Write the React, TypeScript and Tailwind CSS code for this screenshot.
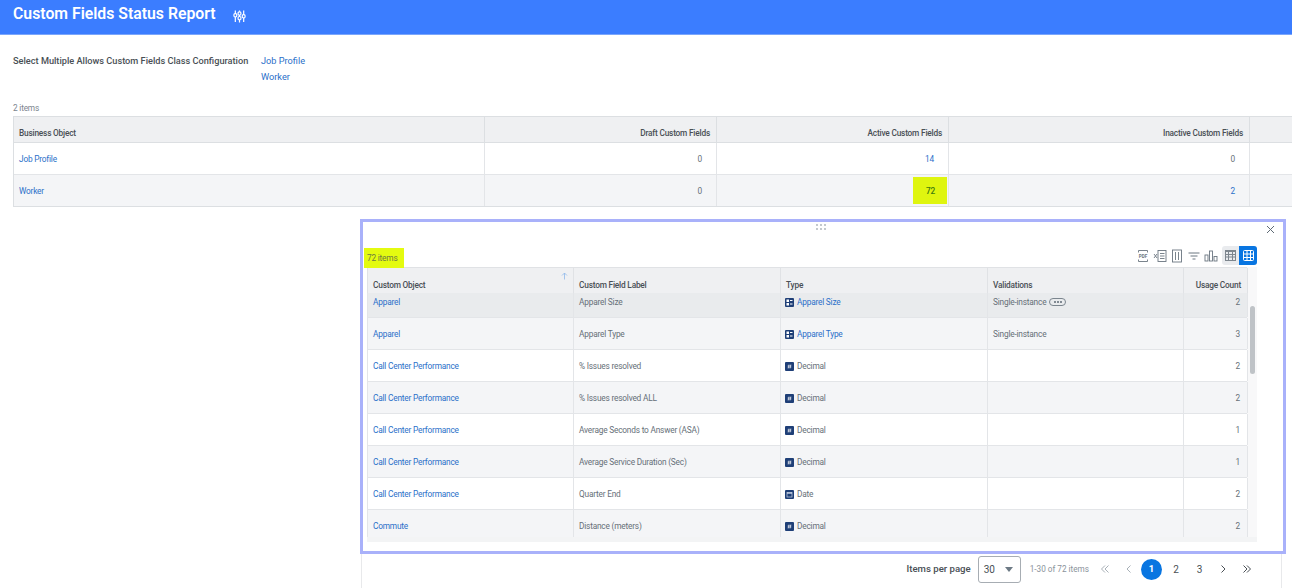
import React from "react";

const font = { fontFamily: "Roboto, 'Liberation Sans', sans-serif" };

function SlidersIcon() {
  return (
    <svg width="13" height="13" viewBox="0 0 14 14" fill="none" stroke="white" strokeWidth="1.3">
      <path d="M2.5 0.5v3.5M2.5 7.5V13M7 0.5v1.3M7 5.5V7M7 10.5V13.5M11.5 0.5v4M11.5 8.5V13" />
      <rect x="1" y="4" width="3" height="3.5" rx="1.2" />
      <rect x="5.5" y="2" width="3" height="3.5" rx="1.2" />
      <rect x="5.5" y="7" width="3" height="3.5" rx="1.2" />
      <rect x="10" y="5" width="3" height="3.5" rx="1.2" />
    </svg>
  );
}

function InstanceIcon() {
  return (
    <svg width="9" height="9" viewBox="0 0 9 9" className="shrink-0">
      <rect width="9" height="9" rx="1" fill="#1f3f77" />
      <rect x="1.5" y="1.5" width="2.5" height="2.5" fill="white" />
      <rect x="5" y="2" width="2.5" height="1" fill="white" />
      <rect x="1.5" y="5" width="2.5" height="2.5" fill="white" />
      <rect x="5" y="5.5" width="2.5" height="1" fill="white" />
    </svg>
  );
}

function DecimalIcon() {
  return (
    <svg width="9" height="9" viewBox="0 0 9 9" className="shrink-0">
      <rect width="9" height="9" rx="1" fill="#1f3f77" />
      <path d="M3.2 6.5L4 2.5M5 6.5L5.8 2.5M2.7 3.9H6.3M2.7 5.1H6.3" stroke="white" strokeWidth="0.6" />
    </svg>
  );
}

function DateIcon() {
  return (
    <svg width="9" height="9" viewBox="0 0 9 9" className="shrink-0">
      <rect width="9" height="9" rx="1" fill="#1f3f77" />
      <rect x="2" y="2.5" width="5" height="4.5" fill="none" stroke="#c8d3e6" strokeWidth="0.7" />
      <rect x="2" y="2.5" width="5" height="1.2" fill="#c8d3e6" />
    </svg>
  );
}

function Toolbar() {
  return (
    <div className="flex items-center gap-[3px] text-[#5e6a75]">
      <svg width="14" height="14" viewBox="0 0 14 14" fill="none" stroke="#6b7680" strokeWidth="0.9">
        <path d="M2.5 3.5V1.5H11.5V3.5M2.5 10.5V12.5H11.5V10.5" />
        <text x="7" y="9" textAnchor="middle" fontSize="4.6" fontWeight="700" fill="#6b7680" stroke="none" fontFamily="Roboto">PDF</text>
      </svg>
      <svg width="14" height="14" viewBox="0 0 14 14" fill="none" stroke="#6b7680" strokeWidth="0.9">
        <rect x="5" y="1.5" width="8" height="11" />
        <path d="M7 4.5H11.5M7 7H11.5M7 9.5H11.5" />
        <path d="M1 5L4 9M4 5L1 9" />
      </svg>
      <svg width="14" height="14" viewBox="0 0 14 14" fill="none" stroke="#6b7680" strokeWidth="0.9">
        <rect x="2.5" y="1" width="9" height="12" />
        <path d="M5.5 3V11M8.5 3V11" />
      </svg>
      <svg width="14" height="14" viewBox="0 0 14 14" fill="none" stroke="#6b7680" strokeWidth="1">
        <path d="M1.5 4H12.5M3.5 7H10.5M5.5 10H8.5" />
      </svg>
      <svg width="14" height="14" viewBox="0 0 14 14" fill="none" stroke="#6b7680" strokeWidth="0.9">
        <rect x="1" y="6" width="3" height="6" />
        <rect x="5.5" y="2" width="3" height="10" />
        <rect x="10" y="7.5" width="3" height="4.5" />
      </svg>
      <div className="ml-[1px] flex h-[19px] items-stretch overflow-hidden rounded-[3px] bg-[#e9ebee]">
        <div className="flex w-[17px] items-center justify-center">
          <svg width="11" height="11" viewBox="0 0 11 11" fill="#7d868e">
            <path d="M0 0H11V11H0ZM1 2V4H3V2ZM4 2V4H7V2ZM8 2V4H10V2ZM1 5V6.5H3V5ZM4 5V6.5H7V5ZM8 5V6.5H10V5ZM1 7.5V10H3V7.5ZM4 7.5V10H7V7.5ZM8 7.5V10H10V7.5Z" fillRule="evenodd" />
          </svg>
        </div>
        <div className="flex w-[18px] items-center justify-center bg-[#0875e1]">
          <svg width="11" height="11" viewBox="0 0 11 11" fill="none" stroke="white" strokeWidth="1">
            <rect x="0.5" y="0.5" width="10" height="10" rx="1" />
            <path d="M0.5 4H10.5M0.5 7.5H10.5M4 0.5V10.5M7.5 0.5V10.5" />
          </svg>
        </div>
      </div>
    </div>
  );
}

type Row = { obj: string; label: string; icon: "i" | "d" | "t"; type: string; link?: boolean; val?: string; more?: boolean; count: string; tone: string };

const rows: Row[] = [
  { obj: "Apparel", label: "Apparel Size", icon: "i", type: "Apparel Size", link: true, val: "Single-instance", more: true, count: "2", tone: "bg-[#e9ebed]" },
  { obj: "Apparel", label: "Apparel Type", icon: "i", type: "Apparel Type", link: true, val: "Single-instance", count: "3", tone: "bg-[#f4f5f7]" },
  { obj: "Call Center Performance", label: "% Issues resolved", icon: "d", type: "Decimal", count: "2", tone: "bg-white" },
  { obj: "Call Center Performance", label: "% Issues resolved ALL", icon: "d", type: "Decimal", count: "2", tone: "bg-[#f4f5f7]" },
  { obj: "Call Center Performance", label: "Average Seconds to Answer (ASA)", icon: "d", type: "Decimal", count: "1", tone: "bg-white" },
  { obj: "Call Center Performance", label: "Average Service Duration (Sec)", icon: "d", type: "Decimal", count: "1", tone: "bg-[#f4f5f7]" },
  { obj: "Call Center Performance", label: "Quarter End", icon: "t", type: "Date", count: "2", tone: "bg-white" },
  { obj: "Commute", label: "Distance (meters)", icon: "d", type: "Decimal", count: "2", tone: "bg-[#f4f5f7]" },
];

const cols2 = "grid grid-cols-[206px_207px_207px_196px_64px]";
const cols1 = "grid grid-cols-[471px_232px_232px_301px_1fr]";

function Pager() {
  const arrow = "flex h-[24px] w-[24px] items-center justify-center";
  return (
    <div className="flex h-[34px] items-center justify-end pb-[4px] pr-[22px]">
      <span className="mr-[7px] text-[9.6px] font-medium text-[#494f55]">Items per page</span>
      <div className="mr-[9px] flex h-[27px] w-[43px] items-center justify-between rounded-[3px] border border-[#a7adb3] pl-[5px] pr-[7px] text-[10px] text-[#494f55]">
        <span>30</span>
        <span className="h-0 w-0 border-x-[4px] border-t-[5px] border-x-transparent border-t-[#6d7a85]" />
      </div>
      <span className="mr-[4px] text-[8.2px] text-[#8a939b]">1-30 of 72 items</span>
      <div className={arrow}>
        <svg width="10" height="10" viewBox="0 0 10 10" fill="none" stroke="#a8b0b7" strokeWidth="1"><path d="M5 1.5L1.5 5L5 8.5M8.5 1.5L5 5L8.5 8.5" /></svg>
      </div>
      <div className={arrow}>
        <svg width="10" height="10" viewBox="0 0 10 10" fill="none" stroke="#a8b0b7" strokeWidth="1"><path d="M6.5 1.5L3 5L6.5 8.5" /></svg>
      </div>
      <div className="flex h-[21px] w-[21px] items-center justify-center rounded-full bg-[#0875e1] text-[9.5px] font-bold text-white">1</div>
      <div className="ml-[2px] flex h-[24px] w-[24px] items-center justify-center text-[10px] text-[#494f55]">2</div>
      <div className="flex h-[24px] w-[23px] items-center justify-center text-[10px] text-[#494f55]">3</div>
      <div className={arrow}>
        <svg width="10" height="10" viewBox="0 0 10 10" fill="none" stroke="#494f55" strokeWidth="1"><path d="M3.5 1.5L7 5L3.5 8.5" /></svg>
      </div>
      <div className={arrow}>
        <svg width="10" height="10" viewBox="0 0 10 10" fill="none" stroke="#494f55" strokeWidth="1"><path d="M1.5 1.5L5 5L1.5 8.5M5 1.5L8.5 5L5 8.5" /></svg>
      </div>
    </div>
  );
}

export default function App() {
  return (
    <div className="h-[588px] w-[1292px] overflow-hidden bg-white text-[#666f78]" style={font}>
      <header className="flex h-[35px] items-center border-b border-[#7ba6fb] bg-[#3b7dff] pb-[6px] pl-[13px]">
        <h1 className="whitespace-nowrap text-[15.8px] font-semibold text-white">Custom Fields Status Report</h1>
        <span className="ml-[17px] mt-[4px]"><SlidersIcon /></span>
      </header>

      <section className="flex pl-[13px] pt-[18px] text-[9.2px] leading-[16px]">
        <span className="w-[248px] whitespace-nowrap font-medium text-[#494f55]">Select Multiple Allows Custom Fields Class Configuration</span>
        <div className="flex flex-col text-[#2a6fc9]">
          <span>Job Profile</span>
          <span>Worker</span>
        </div>
      </section>

      <div className="pl-[13px] pt-[17px] text-[8.3px] leading-[12px] tracking-[-0.2px] text-[#7b858e]">2 items</div>

      <div className={`${cols1} ml-[13px] mt-[2px] border-y border-l border-[#dcdfe2] text-[8.3px] tracking-[-0.2px]`}>
        <div className="flex h-[26px] items-end border-r border-b border-[#dcdfe2] bg-[#eff0f2] pb-[3px] pl-[5px] font-medium text-[#494f55]">Business Object</div>
        <div className="flex items-end justify-end border-r border-b border-[#dcdfe2] bg-[#eff0f2] pb-[3px] pr-[6px] font-medium text-[#494f55]">Draft Custom Fields</div>
        <div className="flex items-end justify-end border-r border-b border-[#dcdfe2] bg-[#eff0f2] pb-[3px] pr-[6px] font-medium text-[#494f55]">Active Custom Fields</div>
        <div className="flex items-end justify-end border-r border-b border-[#dcdfe2] bg-[#eff0f2] pb-[3px] pr-[6px] font-medium text-[#494f55]">Inactive Custom Fields</div>
        <div className="border-b border-[#dcdfe2] bg-[#eff0f2]" />

        <div className="flex h-[32px] items-center border-r border-b border-[#e3e5e8] pl-[5px] pt-[1px] text-[#2a6fc9]">Job Profile</div>
        <div className="flex items-center justify-end border-r border-b border-[#e3e5e8] pr-[14px] pt-[1px]">0</div>
        <div className="flex items-center justify-end border-r border-b border-[#e3e5e8] pr-[14px] pt-[1px] text-[#2a6fc9]">14</div>
        <div className="flex items-center justify-end border-r border-b border-[#e3e5e8] pr-[14px] pt-[1px]">0</div>
        <div className="border-b border-[#e3e5e8]" />

        <div className="flex h-[31px] items-center border-r border-[#e3e5e8] bg-[#f4f5f7] pl-[5px] pt-[1px] text-[#2a6fc9]">Worker</div>
        <div className="flex items-center justify-end border-r border-[#e3e5e8] bg-[#f4f5f7] pr-[14px] pt-[1px]">0</div>
        <div className="flex items-center justify-end border-r border-[#e3e5e8] bg-[#f4f5f7] pr-[1px]">
          <span className="flex h-[27px] w-[34px] items-center justify-center bg-[#dff50f] pl-[1px] pt-[1px] font-medium text-[#3c7a10]">72</span>
        </div>
        <div className="flex items-center justify-end border-r border-[#e3e5e8] bg-[#f4f5f7] pr-[14px] pt-[1px] text-[#2a6fc9]">2</div>
        <div className="bg-[#f4f5f7]" />
      </div>

      <div className="ml-[361px] mt-[12px] w-[921px] border-x border-[#e8e9eb]">
        <section className="relative -ml-[2px] -mr-[5px] h-[335px] border-[3px] border-[#a9b1fa] bg-white">
          <div className="flex h-[9px] justify-center pr-[4px] pt-[2px]">
            <svg width="10" height="6" viewBox="0 0 10 6" fill="#a8b0b7">
              <circle cx="1" cy="1" r="0.9" /><circle cx="5" cy="1" r="0.9" /><circle cx="9" cy="1" r="0.9" />
              <circle cx="1" cy="5" r="0.9" /><circle cx="5" cy="5" r="0.9" /><circle cx="9" cy="5" r="0.9" />
            </svg>
          </div>
          <svg width="9" height="9" viewBox="0 0 9 9" fill="none" stroke="#5e6a75" strokeWidth="1" className="absolute right-[8px] top-[3px]">
            <path d="M1 1L8 8M8 1L1 8" />
          </svg>

          <div className="flex h-[36px] items-end justify-between pl-[1px] pr-[26px]">
            <span className="-mb-[1px] flex h-[20px] w-[40px] items-center bg-[#e4fb10] pl-[3px] pt-[1px] text-[8.3px] tracking-[-0.2px] text-[#6c7a40]">72 items</span>
            <div className="mb-[2px]"><Toolbar /></div>
          </div>

          <div className="ml-[4px] w-[890px] bg-[#f8f8f9] tracking-[-0.2px]">
            <div className={`${cols2} w-[880px] border-l border-t border-[#e0e2e5] bg-[#eff0f2] text-[8.3px] font-medium text-[#494f55]`}>
              <div className="relative flex h-[25px] items-end border-r border-[#e0e2e5] pb-[2px] pl-[5px]">
                Custom Object
                <svg width="7" height="8" viewBox="0 0 7 8" fill="none" stroke="#8fb9ea" strokeWidth="0.8" className="absolute right-[5px] top-[4px]">
                  <path d="M3.5 7.5V1M1 3.5L3.5 1L6 3.5" />
                </svg>
              </div>
              <div className="flex items-end border-r border-[#e0e2e5] pb-[2px] pl-[5px]">Custom Field Label</div>
              <div className="flex items-end border-r border-[#e0e2e5] pb-[2px] pl-[5px]">Type</div>
              <div className="flex items-end border-r border-[#e0e2e5] pb-[2px] pl-[5px]">Validations</div>
              <div className="flex items-end justify-end border-r border-[#e0e2e5] pb-[2px] pr-[6px]">Usage Count</div>
            </div>

            <div className="relative h-[244px] overflow-hidden">
              <div className="-mt-[7px] w-[880px]">
                {rows.map((r, i) => (
                  <div key={i} className={`${cols2} h-[32px] border-b border-l border-[#e3e5e8] text-[8.3px] ${r.tone}`}>
                    <div className="flex items-center border-r border-[#e3e5e8] pl-[5px] pt-[1px] text-[#2a6fc9]">{r.obj}</div>
                    <div className="flex items-center border-r border-[#e3e5e8] pl-[5px] pt-[1px]">{r.label}</div>
                    <div className="flex items-center gap-[3px] border-r border-[#e3e5e8] pl-[4px] pt-[1px]">
                      {r.icon === "i" ? <InstanceIcon /> : r.icon === "d" ? <DecimalIcon /> : <DateIcon />}
                      <span className={r.link ? "text-[#2a6fc9]" : ""}>{r.type}</span>
                    </div>
                    <div className="flex items-center gap-[3px] border-r border-[#e3e5e8] pl-[5px] pt-[1px]">
                      {r.val}
                      {r.more && (
                        <span className="flex h-[8px] w-[17px] items-center justify-center gap-[1.5px] rounded-full border border-[#7b858e]">
                          <i className="h-[1.5px] w-[1.5px] rounded-full bg-[#5e6a75]" />
                          <i className="h-[1.5px] w-[1.5px] rounded-full bg-[#5e6a75]" />
                          <i className="h-[1.5px] w-[1.5px] rounded-full bg-[#5e6a75]" />
                        </span>
                      )}
                    </div>
                    <div className="flex items-center justify-end border-r border-[#e3e5e8] pr-[7px] pt-[1px]">{r.count}</div>
                  </div>
                ))}
              </div>
              <span className="absolute right-[2px] top-[13px] h-[68px] w-[5px] rounded-full bg-[#bfc3c7]" />
            </div>
            <div className="h-[5px] bg-[#f3f4f5]" />
          </div>
        </section>
        <Pager />
      </div>
    </div>
  );
}
